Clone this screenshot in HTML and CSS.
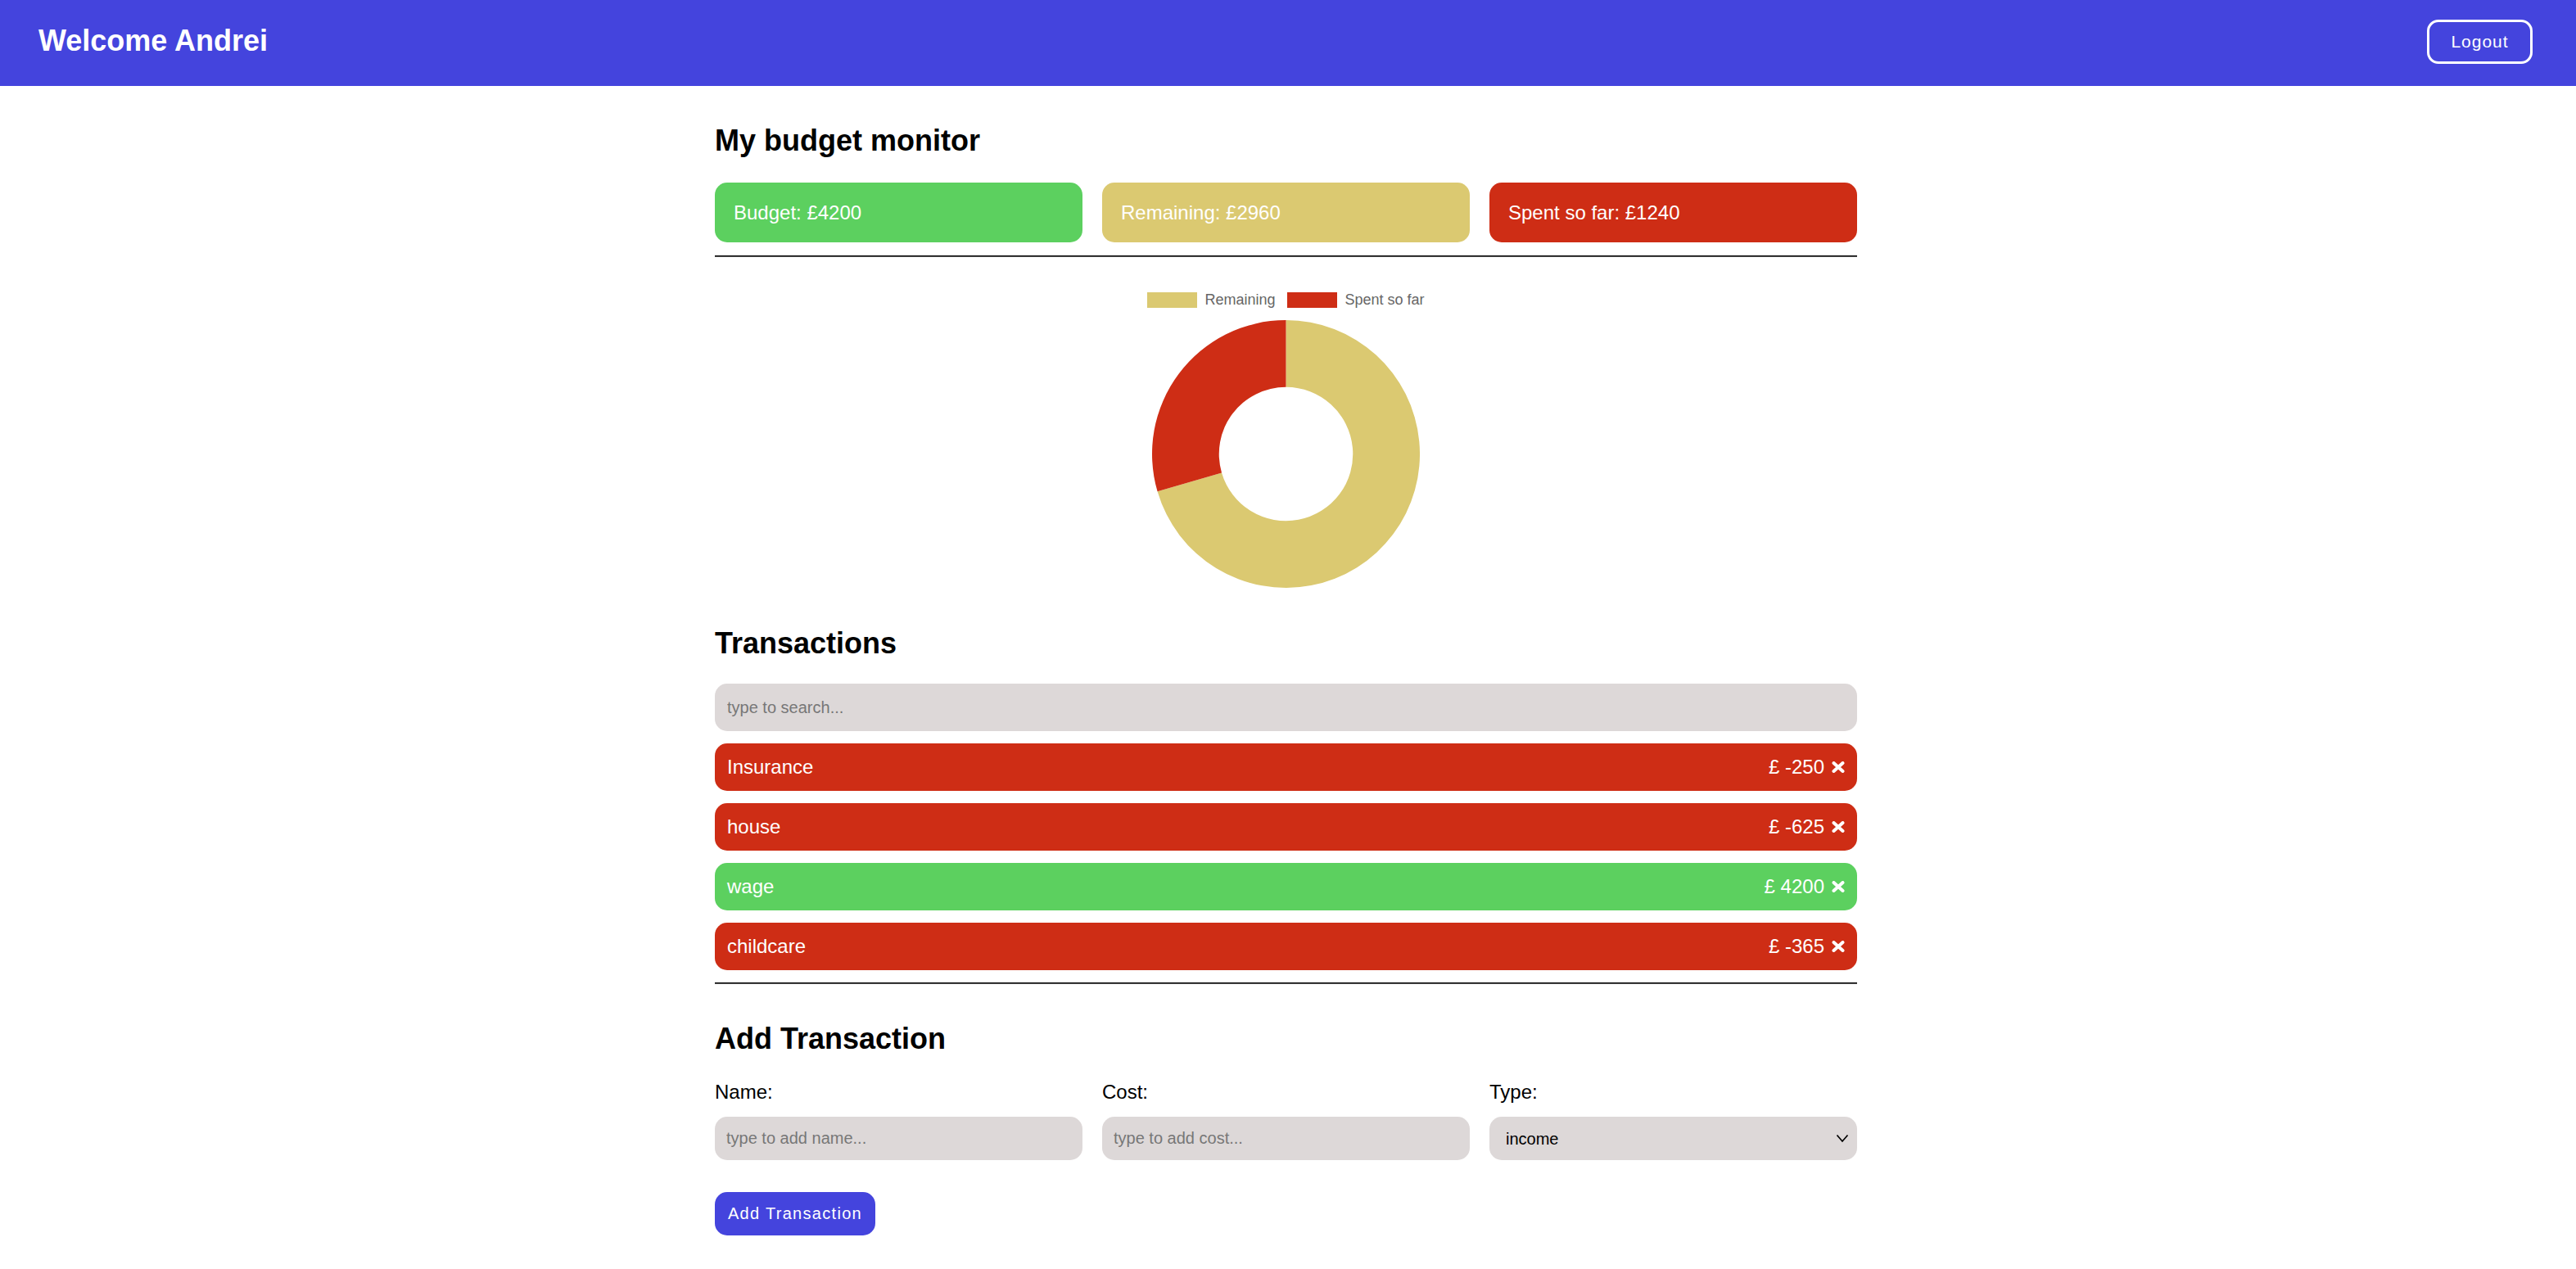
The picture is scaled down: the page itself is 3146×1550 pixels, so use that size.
FILE: index.html
```html
<!DOCTYPE html>
<html lang="en">
<head>
<meta charset="utf-8">
<title>Budget monitor</title>
<link rel="stylesheet" href="styles.css">
</head>
<body>
<header class="topbar">
  <h1 class="welcome">Welcome Andrei</h1>
  <button class="logout" type="button">Logout</button>
</header>

<main class="container">
  <h2 class="section-title first">My budget monitor</h2>
  <div class="summary">
    <div class="card card-budget">Budget: £4200</div>
    <div class="card card-remaining">Remaining: £2960</div>
    <div class="card card-spent">Spent so far: £1240</div>
  </div>
  <hr class="divider">

  <div class="chart">
    <div class="legend">
      <span class="legend-item"><span class="swatch swatch-remaining"></span>Remaining</span>
      <span class="legend-item"><span class="swatch swatch-spent"></span>Spent so far</span>
    </div>
    <svg class="donut" width="327" height="327" viewBox="-163.5 -163.5 327 327">
      <path class="seg-remaining" d="M 0 -163.5 A 163.5 163.5 0 1 1 -156.93 45.86 L -78.47 22.93 A 81.75 81.75 0 1 0 0 -81.75 Z"/>
      <path class="seg-spent" d="M -156.93 45.86 A 163.5 163.5 0 0 1 0 -163.5 L 0 -81.75 A 81.75 81.75 0 0 0 -78.47 22.93 Z"/>
    </svg>
  </div>

  <h2 class="section-title">Transactions</h2>
  <input class="search" type="text" placeholder="type to search...">
  <ul class="tx-list">
    <li class="tx tx-expense"><span class="tx-name">Insurance</span><span class="tx-amount"><span class="tx-value">£ -250</span><svg class="x-icon" width="16" height="14" viewBox="0 0 16 14"><path d="M2.5 2 L13.5 12 M13.5 2 L2.5 12"/></svg></span></li>
    <li class="tx tx-expense"><span class="tx-name">house</span><span class="tx-amount"><span class="tx-value">£ -625</span><svg class="x-icon" width="16" height="14" viewBox="0 0 16 14"><path d="M2.5 2 L13.5 12 M13.5 2 L2.5 12"/></svg></span></li>
    <li class="tx tx-income"><span class="tx-name">wage</span><span class="tx-amount"><span class="tx-value">£ 4200</span><svg class="x-icon" width="16" height="14" viewBox="0 0 16 14"><path d="M2.5 2 L13.5 12 M13.5 2 L2.5 12"/></svg></span></li>
    <li class="tx tx-expense"><span class="tx-name">childcare</span><span class="tx-amount"><span class="tx-value">£ -365</span><svg class="x-icon" width="16" height="14" viewBox="0 0 16 14"><path d="M2.5 2 L13.5 12 M13.5 2 L2.5 12"/></svg></span></li>
  </ul>
  <hr class="divider divider-bottom">

  <h2 class="section-title add-title">Add Transaction</h2>
  <form class="add-form">
    <div class="fields">
      <div class="field">
        <label class="field-label" for="name">Name:</label>
        <input class="field-input" id="name" type="text" placeholder="type to add name...">
      </div>
      <div class="field">
        <label class="field-label" for="cost">Cost:</label>
        <input class="field-input" id="cost" type="text" placeholder="type to add cost...">
      </div>
      <div class="field">
        <label class="field-label" for="type">Type:</label>
        <div class="select-wrap">
          <select class="field-input field-select" id="type">
            <option>income</option>
            <option>expense</option>
          </select>
          <svg class="chevron" width="16" height="11" viewBox="0 0 16 11"><path d="M1.5 1.5 L8 9 L14.5 1.5"/></svg>
        </div>
      </div>
    </div>
    <button class="add-btn" type="button">Add Transaction</button>
  </form>
</main>
</body>
</html>
```

FILE: styles.css
```css
* { box-sizing: border-box; }

body {
  margin: 0;
  font-family: "Liberation Sans", Arial, sans-serif;
  color: #000;
  background: #fff;
}

.topbar {
  height: 105px;
  background: #4444dd;
  display: flex;
  align-items: center;
  justify-content: space-between;
  padding: 0 53px 3px 47px;
}

.welcome {
  margin: 0 0 3px;
  color: #fff;
  font-size: 36px;
  font-weight: bold;
  line-height: 41px;
}

.logout {
  width: 129px;
  height: 54px;
  background: transparent;
  border: 3px solid #fff;
  border-radius: 14px;
  color: #fff;
  font-family: "Liberation Sans", Arial, sans-serif;
  font-size: 21px;
  letter-spacing: 1px;
  padding: 0;
}

.container {
  width: 1395px;
  margin-left: calc(50% - 700px);
  padding-bottom: 40px;
}

.section-title {
  margin: 47px 0 0;
  font-size: 36px;
  line-height: 41px;
  font-weight: bold;
}

.section-title.first { margin-top: 46px; }

.summary {
  margin-top: 31px;
  display: grid;
  grid-template-columns: repeat(3, 1fr);
  gap: 24px;
}

.card {
  height: 73px;
  border-radius: 15px;
  display: flex;
  align-items: center;
  padding: 0 23px;
  color: #fff;
  font-size: 24px;
}

.card-budget { background: #5cd05f; }
.card-remaining { background: #dbc971; }
.card-spent { background: #ce2d15; }

.divider {
  margin: 16px 0 0;
  border: none;
  border-top: 1px solid #000;
  border-bottom: 1px solid #555;
  height: 0;
}

.chart {
  margin-top: 43px;
  display: flex;
  flex-direction: column;
  align-items: center;
}

.legend {
  display: flex;
  gap: 15px;
  height: 19px;
  font-size: 18px;
  line-height: 19px;
  color: #666;
}

.legend-item {
  display: flex;
  align-items: center;
  gap: 9px;
}

.swatch {
  width: 61px;
  height: 19px;
  display: inline-block;
}

.swatch-remaining { background: #dbc971; }
.swatch-spent { background: #ce2d15; }

.donut {
  margin-top: 15px;
  display: block;
}

.seg-remaining { fill: #dbc971; }
.seg-spent { fill: #ce2d15; }

.search {
  display: block;
  width: 100%;
  height: 58px;
  margin-top: 29px;
  border: none;
  border-radius: 15px;
  background: #ddd8d8;
  padding: 0 15px;
  font-family: "Liberation Sans", Arial, sans-serif;
  font-size: 20px;
  color: #000;
}

.search::placeholder,
.field-input::placeholder { color: #777; }

.tx-list {
  list-style: none;
  margin: 15px 0 0;
  padding: 0;
  display: flex;
  flex-direction: column;
  gap: 15px;
}

.tx {
  height: 58px;
  border-radius: 15px;
  display: flex;
  align-items: center;
  justify-content: space-between;
  padding: 0 15px;
  color: #fff;
  font-size: 24px;
}

.tx-expense { background: #ce2d15; }
.tx-income { background: #5cd05f; }

.tx-amount {
  display: flex;
  align-items: center;
  gap: 9px;
}

.x-icon {
  display: block;
  fill: none;
  stroke: #fff;
  stroke-width: 4;
  stroke-linecap: round;
}

.divider-bottom { margin-top: 15px; }

.add-title { margin-top: 46px; }

.add-form { margin-top: 31px; }

.fields {
  display: grid;
  grid-template-columns: repeat(3, 1fr);
  gap: 24px;
}

.field {
  display: flex;
  flex-direction: column;
}

.field-label {
  font-size: 24px;
  line-height: 28px;
}

.field-input {
  margin-top: 16px;
  height: 53px;
  width: 100%;
  border: none;
  border-radius: 15px;
  background: #ddd8d8;
  padding: 0 14px;
  font-family: "Liberation Sans", Arial, sans-serif;
  font-size: 20px;
  color: #000;
}

.select-wrap {
  position: relative;
  display: flex;
  flex-direction: column;
}

.field-select {
  -webkit-appearance: none;
  appearance: none;
  padding: 0 40px 0 20px;
}

.chevron {
  position: absolute;
  right: 10px;
  bottom: 21px;
  fill: none;
  stroke: #000;
  stroke-width: 1.7;
  pointer-events: none;
}

.add-btn {
  display: block;
  margin-top: 39px;
  width: 196px;
  height: 53px;
  border: none;
  border-radius: 15px;
  background: #4444dd;
  color: #fff;
  font-family: "Liberation Sans", Arial, sans-serif;
  font-size: 20px;
  letter-spacing: 1.3px;
  padding: 0;
}
```
